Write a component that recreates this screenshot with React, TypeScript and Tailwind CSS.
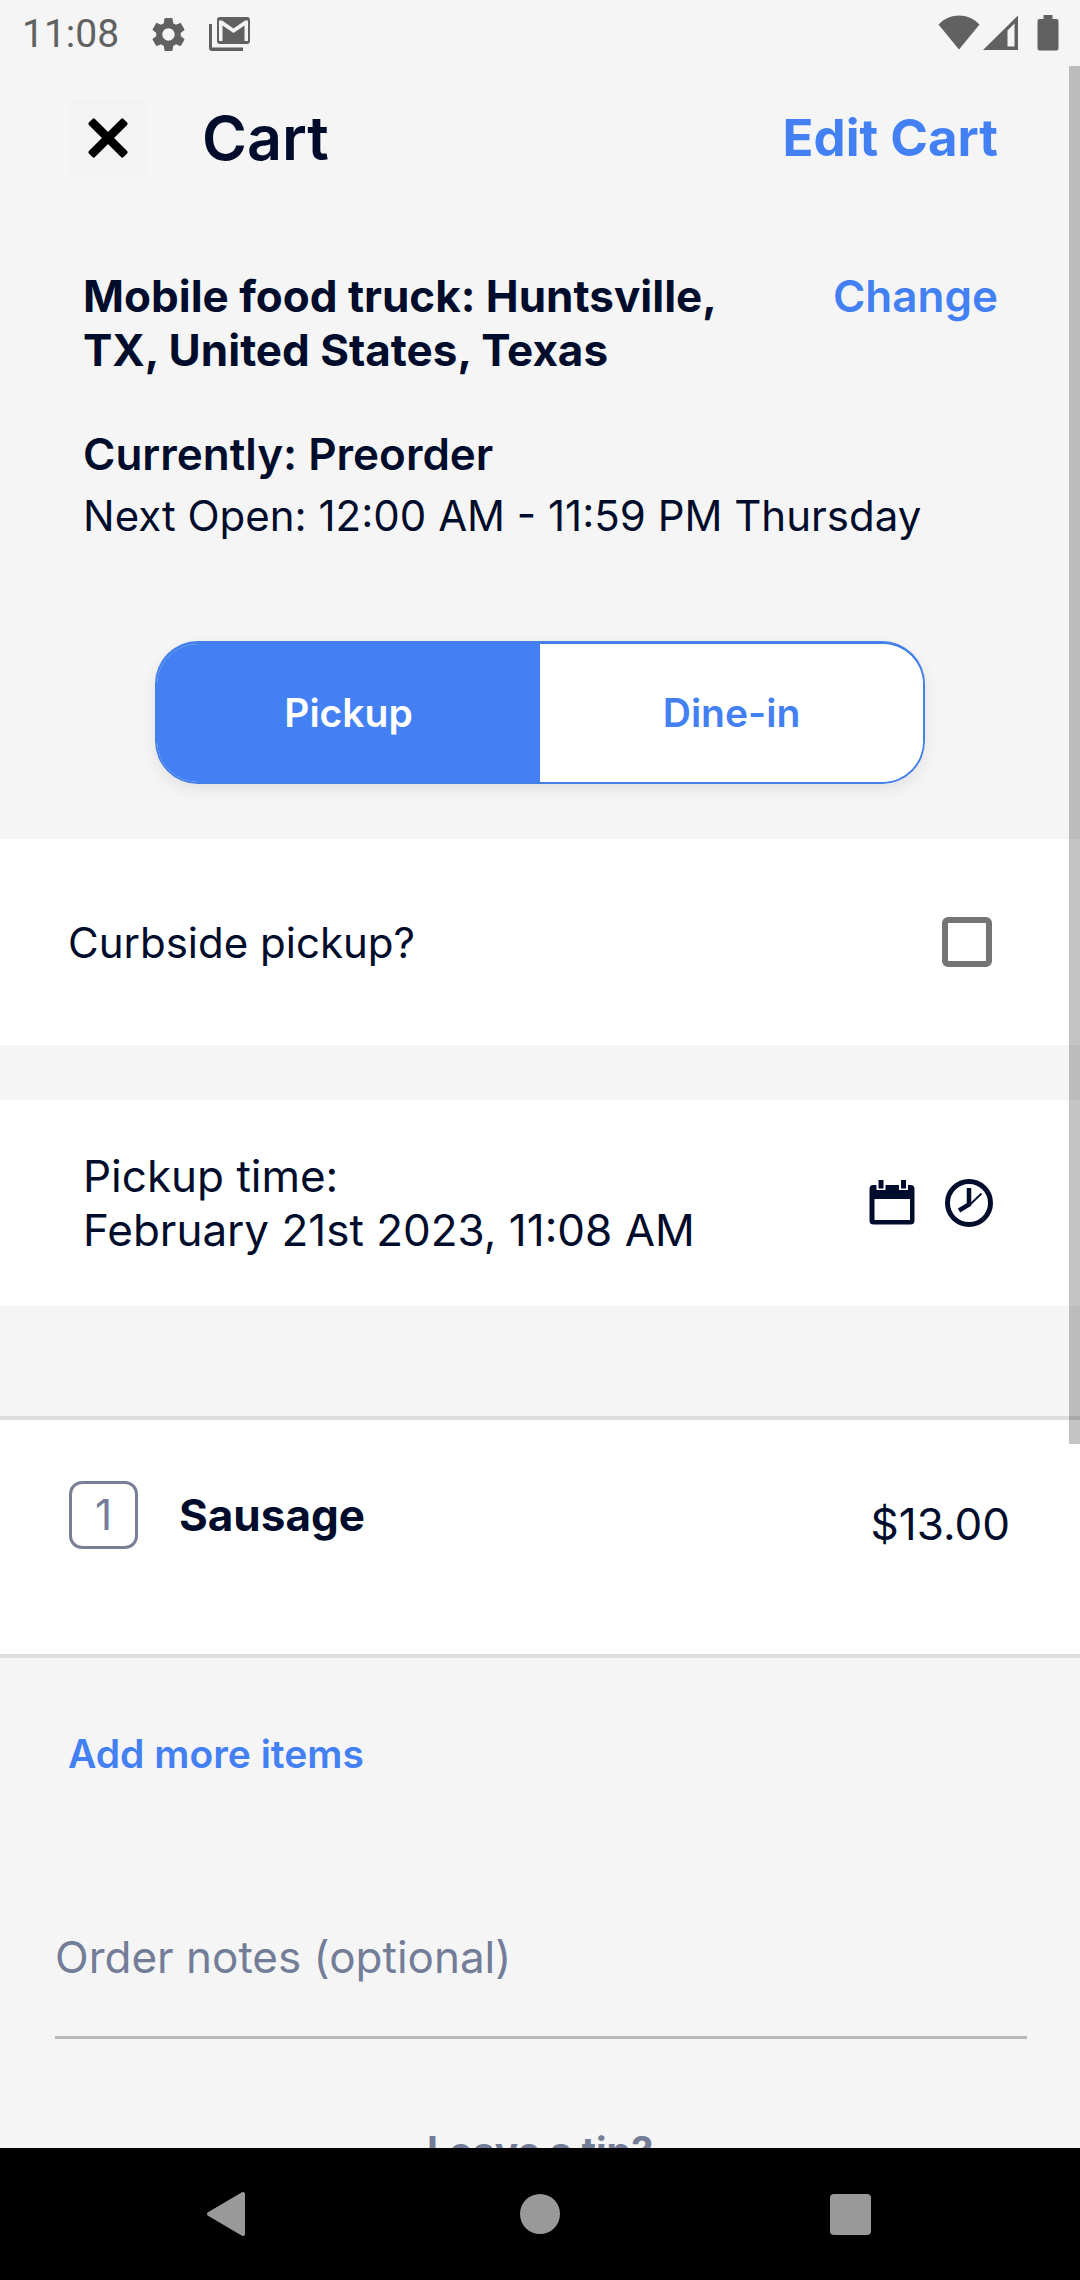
import { useState } from "react";
import { MdSettings } from "react-icons/md";

function GmailIcon() {
  return (
    <svg viewBox="0 0 42 36" className="h-9 w-[42px]" fill="currentColor" aria-hidden="true">
      <path d="M11 1h27a3 3 0 0 1 3 3v21a3 3 0 0 1-3 3H11a3 3 0 0 1-3-3V4a3 3 0 0 1 3-3Zm-1 24h3.500V9.500L24.500 17 35.500 9.500V25H39V4.500h-3L24.500 12.500 13 4.500h-3V25Z" fillRule="evenodd" />
      <path d="M0 8h3v23.500h31V35H3a3 3 0 0 1-3-3Z" />
    </svg>
  );
}

function WifiIcon() {
  return (
    <svg viewBox="0 0 42 36" className="h-9 w-[42px]" fill="currentColor" aria-hidden="true">
      <path d="M0.500 9.500C12-2.500 30-2.500 41.500 9.500L21 34.500Z" />
    </svg>
  );
}

function SignalIcon() {
  return (
    <svg viewBox="0 0 36 36" className="size-9" fill="currentColor" aria-hidden="true">
      <path fillRule="evenodd" d="M0 35 35 0.500V35ZM24.500 15.500V31.500H31.500V8.500Z" />
    </svg>
  );
}

function BatteryIcon() {
  return (
    <svg viewBox="0 0 22 36" className="h-9 w-[22px]" fill="currentColor" aria-hidden="true">
      <path d="M6.500 0h9v4H19.500a2 2 0 0 1 2 2V33.500a2 2 0 0 1-2 2H2.500a2 2 0 0 1-2-2V6a2 2 0 0 1 2-2H6.500Z" />
    </svg>
  );
}

function CloseIcon() {
  return (
    <svg viewBox="0 0 42 42" className="size-[42px]" aria-hidden="true">
      <g transform="rotate(45 21 21)">
        <rect x="-3.500" y="16.700" width="49" height="8.600" rx="1.800" />
        <rect x="16.700" y="-3.500" width="8.600" height="49" rx="1.800" />
      </g>
    </svg>
  );
}

function CalendarIcon() {
  return (
    <svg viewBox="0 0 48 48" className="size-12" fill="currentColor" aria-hidden="true">
      <path
        fillRule="evenodd"
        d="M4.500 6H7.500V11H16.500V6H30V11H39V6H41.500a4 4 0 0 1 4 4V41.500a4 4 0 0 1-4 4H4.500a4 4 0 0 1-4-4V10a4 4 0 0 1 4-4ZM5.500 20V41H41V20Z"
      />
      <path d="M9.500 1h5v8.500h-5ZM32 1h5v8.500h-5Z" />
    </svg>
  );
}

function ClockIcon() {
  return (
    <svg viewBox="0 0 48 48" className="size-12" fill="none" stroke="currentColor" aria-hidden="true">
      <circle cx="24" cy="24" r="21.500" strokeWidth="5" />
      <path d="M24 9V25.500L14 31.500" strokeWidth="4.500" />
      <path d="M23.500 27 36.500 14.500" strokeWidth="1.800" />
    </svg>
  );
}

function StatusBar() {
  return (
    <div className="flex h-[66px] shrink-0 items-start justify-between pr-[21px] pl-[22px] text-[#616161]">
      <div className="flex items-center pt-3">
        <time className="font-[Roboto,sans-serif] text-[39px] leading-[44px]">11:08</time>
        <MdSettings className="ml-[29px] size-[41px]" aria-hidden="true" />
        <span className="ml-5">
          <GmailIcon />
        </span>
      </div>
      <div className="flex items-center pt-[15px]">
        <WifiIcon />
        <span className="ml-[3px]">
          <SignalIcon />
        </span>
        <span className="ml-[18px]">
          <BatteryIcon />
        </span>
      </div>
    </div>
  );
}

const services = ["Pickup", "Dine-in"];
const cartItems = [{ name: "Sausage", quantity: 1, price: "$13.00" }];

export default function App() {
  const [service, setService] = useState("Pickup");

  return (
    <div className="flex h-screen flex-col bg-[#f5f5f5] font-[Inter,sans-serif] text-[#000c2b]">
      <StatusBar />

      <div className="relative min-h-0 flex-1">
        <main className="h-full overflow-y-auto [scrollbar-width:none]">
          <header className="flex items-center pt-[33px] pr-[82px] pl-[69px]">
            <button type="button" aria-label="Close" className="flex size-[77px] items-center justify-center bg-[#f3f3f3] text-black">
              <CloseIcon />
            </button>
            <h1 className="ml-14 flex-1 text-[61px] leading-[76px] font-semibold">Cart</h1>
            <button type="button" className="text-[51px] leading-[76px] font-bold text-[#4380f4]">
              Edit Cart
            </button>
          </header>

          <section className="pt-[93px] pr-[82px] pl-[83px] text-[44px] leading-[54px]">
            <div className="flex items-start justify-between">
              <h2 className="w-[660px] font-bold">Mobile food truck: Huntsville, TX, United States, Texas</h2>
              <button type="button" className="font-semibold text-[#4380f4]">
                Change
              </button>
            </div>
            <p className="mt-[50px] font-semibold">Currently: Preorder</p>
            <p className="mt-2 text-[42px]">Next Open: 12:00 AM - 11:59 PM Thursday</p>
          </section>

          <div className="mx-auto mt-[98px] mb-[55px] flex h-[143px] w-[770px] overflow-hidden rounded-[43px] border-2 border-t-3 border-[#4380e8] bg-white shadow-[0_6px_16px_rgba(0,0,0,0.08)]">
            {services.map((name) => (
              <button
                key={name}
                type="button"
                aria-pressed={service === name}
                onClick={() => setService(name)}
                className={
                  service === name
                    ? "flex-1 bg-[#4380f4] text-[39px] font-semibold text-white"
                    : "flex-1 bg-white text-[39px] font-semibold text-[#4380f4]"
                }
              >
                {name}
              </button>
            ))}
          </div>

          <label className="flex h-[206px] items-center justify-between bg-white pr-[88px] pl-[68px] text-[42px]">
            Curbside pickup?
            <input type="checkbox" className="size-[50px] appearance-none rounded-[6px] border-6 border-[#757575] checked:bg-[#4380f4]" />
          </label>

          <section className="mt-[55px] flex h-[206px] items-center justify-between bg-white pr-[87px] pl-[83px]">
            <p className="text-[44px] leading-[54px]">
              Pickup time:
              <br />
              February 21st 2023, 11:08 AM
            </p>
            <div className="flex gap-7">
              <button type="button" aria-label="Choose date">
                <CalendarIcon />
              </button>
              <button type="button" aria-label="Choose time">
                <ClockIcon />
              </button>
            </div>
          </section>

          <ul className="mt-[110px] border-t-4 border-[#dedede] bg-white">
            {cartItems.map((item) => (
              <li key={item.name} className="flex h-[238px] items-start border-b-4 border-[#dedede] pt-[61px] pr-[70px] pl-[69px] text-[44px] leading-[68px]">
                <span className="flex h-[68px] w-[69px] items-center justify-center rounded-[13px] border-3 border-[#797f94] text-[42px] text-[#737d98]">
                  {item.quantity}
                </span>
                <span className="ml-[41px] flex-1 font-bold">{item.name}</span>
                <span className="pt-[9px]">{item.price}</span>
              </li>
            ))}
          </ul>

          <button type="button" className="mt-[69px] ml-[68px] block text-[39px] leading-[54px] font-semibold text-[#4380f4]">
            Add more items
          </button>

          <div className="mt-[119px] mr-[53px] ml-[55px] border-b-3 border-[#b9b9b9] pt-[30px] pb-[52px]">
            <input
              type="text"
              aria-label="Order notes (optional)"
              placeholder="Order notes (optional)"
              className="block h-[54px] w-full bg-transparent text-[44px] placeholder:text-[#737d98] focus:outline-none"
            />
          </div>

          <h2 className="mt-[85px] pb-16 text-center text-[39px] leading-[54px] font-bold text-[#737d98]">Leave a tip?</h2>
        </main>
        <div className="pointer-events-none absolute top-0 right-0 h-[66.2%] w-[11px] bg-black/23" />
      </div>

      <nav className="flex h-[132px] shrink-0 items-center justify-center gap-[270px] bg-black text-[#999999]">
        <button type="button" aria-label="Back">
          <svg viewBox="0 0 46 46" className="size-[46px]" fill="currentColor" stroke="currentColor" strokeWidth="4" strokeLinejoin="round">
            <path d="M5 23 39 3V43Z" />
          </svg>
        </button>
        <button type="button" aria-label="Home" className="size-10 rounded-full bg-current" />
        <button type="button" aria-label="Recent apps" className="w-[46px]">
          <span className="block size-[41px] rounded-[4px] bg-current" />
        </button>
      </nav>
    </div>
  );
}
